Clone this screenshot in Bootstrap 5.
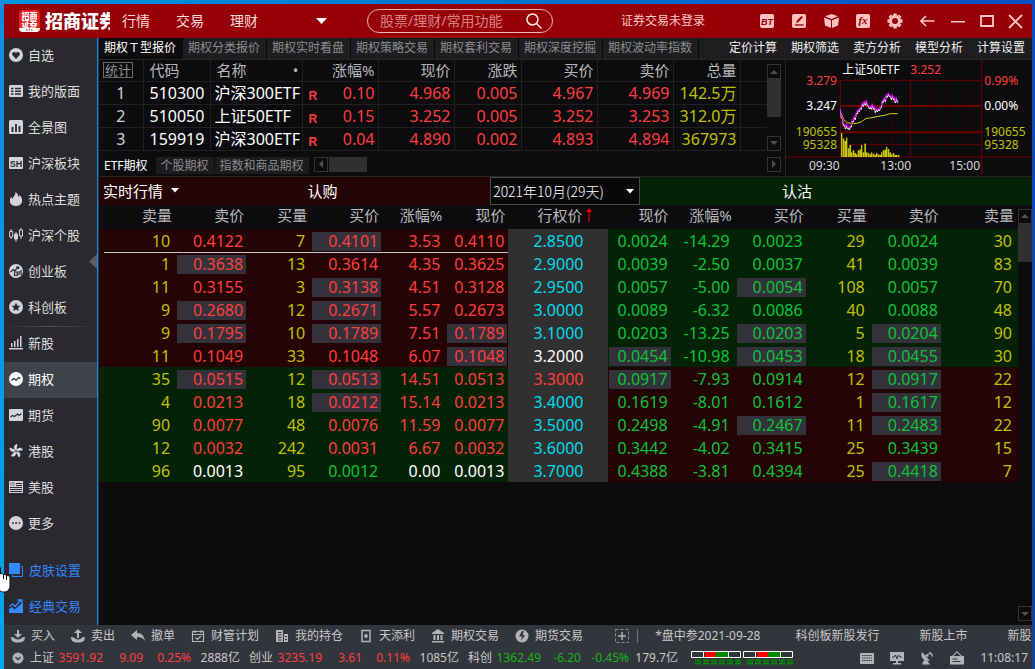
<!DOCTYPE html>
<html lang="zh-CN">
<head>
<meta charset="utf-8">
<meta name="viewport" content="width=device-width, initial-scale=1">
<title>招商证券</title>
<link href="https://cdn.jsdelivr.net/npm/bootstrap@5.3.0/dist/css/bootstrap.min.css" rel="stylesheet">
<style>
:root{--panel:#0c0c0e;--line:#252528;--up:#ff3d3d;--down:#0dc23b;--vol:#c0c000;--redbg:#250405;--greenbg:#042205}
body{font-family:"Noto Sans","Noto Sans CJK SC",sans-serif;font-size:12px;line-height:20px;color:#d2d2d2;
 background:linear-gradient(180deg,#0c8ee0,#00a8ee) left/4px 100% no-repeat,linear-gradient(180deg,#0a4cc0,#0d43a0) right/3px 100% no-repeat,linear-gradient(90deg,#0095e2,#0a50c0);
 padding:4px 3px 0 4px;overflow:hidden}
a{color:inherit;text-decoration:none}
button{background:none;border:0;padding:0;color:inherit}
svg{display:block;flex:none}
.up{color:var(--up)}.down{color:var(--down)}.vol{color:var(--vol)}.cyan{color:#00dcf0}.flat{color:#fff}
.app{min-height:calc(100vh - 4px)}
/* title bar */
.titlebar{height:34px;background:#960006;color:#ffc8c8;padding-left:15px}
.wordmark{width:65px;font-size:18px;font-weight:900;color:#fff;overflow:hidden;white-space:nowrap;margin-left:5px}
.mainmenu{font-size:14px;gap:26px;margin-left:12px;color:#f6dcdc}
.search{width:186px;height:24px;border:1px solid #f0b4b4;border-radius:12px;margin-left:39px;padding:0 10px 0 12px}
.search input{background:none;border:0;outline:0;color:#fff;font-size:14px;padding:0;min-width:0}
.search input::placeholder{color:#d98585;opacity:1}
.login{margin-left:68px}
.wintools{margin-right:2px}
.wintools button{width:32px;display:flex;justify-content:center}
.wintools .win{width:29px}
/* side bar */
.side{width:93px;background:#29292f;position:relative}
.side a{height:36px;display:flex;align-items:center;padding:0 0 2px 5px;gap:5px;font-size:13px;color:#dedede}
.side a svg{fill:#d4d4d6}
.side a.on{background:#40434b;color:#fff}
.side a.on svg{fill:#fff}
.side a.blue{color:#3388ff;gap:6px}.side a.blue svg{fill:#3388ff}
.side .rule{background:linear-gradient(90deg,transparent,#505056,transparent) top/100% 1px no-repeat}
.fold{position:absolute;right:0;top:216px}
.work{background:var(--panel);margin-left:1px;border-left:1px solid #303034;min-width:0}
/* page tabs */
.tabsbar{height:22px;background:#1e1e20;border-bottom:1px solid var(--line);white-space:nowrap}
.tabsbar .t{width:84px;border-right:1px solid #08080a;color:#8c8c8e;padding-left:5px}
.tabsbar .t.wide{width:96px}
.tabsbar .t.on{background:var(--panel);color:#fff}
.tabsbar .r{gap:14px;color:#f0f0f0;margin-right:7px}
/* quote list */
.watch{border-bottom:1px solid var(--line)}
.quotes,.chain{table-layout:fixed;width:100%;border-collapse:collapse;white-space:nowrap}
.quotes th,.chain th{font-weight:400;font-size:15px;color:#b8b8ba}
.quotes th,.quotes td{height:23px;border:1px solid #202023;border-width:0 1px 1px 0;padding:0 3px 0 0;text-align:right;line-height:20px}
.quotes th{height:21px;line-height:18px}
.quotes td{font-size:16px}
.quotes .l{text-align:left;padding-left:6px}.quotes .c{text-align:center;padding:0}
.quotes tr>:last-child{border-right:0}
.stat{border:1px solid #6a6a6c;font-size:13px;line-height:14px;padding:0 1px;color:#909092;display:block}
.rmark{font:bold 12px "Liberation Sans",sans-serif;padding:6px 0 0 6px}
.sb{width:14px}
.arrowbox{width:14px;height:15px;border:1px solid #333335;display:flex;align-items:center;justify-content:center;flex:none}
.arrowbox svg{fill:#505052}
.thumb{background:#303032}
.subtabs{gap:1px;padding:6px 4px 2px 0}
.subtabs a{height:17px;line-height:17px;padding:0 5px;color:#8c8c8e;background:#1c1c1e}
.subtabs a.on{background:none;color:#fff;padding-right:7px}
.chartbox{border-left:1px solid var(--line)}
/* option chain */
.band{height:28px;color:#fff;font-size:15px}
.call{background:var(--redbg)}.put{background:var(--greenbg)}
.band .put{width:42%;padding-right:78px}
.expiry{width:150px;background:#08080a;border:1px solid #4a4a4c;color:#fff;font:300 14px "Noto Sans CJK SC",sans-serif;position:relative}
.expiry select{appearance:none;background:none;border:0;color:inherit;font:inherit;width:100%;height:26px;padding:0 2px;outline:0}
.expiry svg{position:absolute;right:5px;top:11px;pointer-events:none}
.chain th{height:24px;text-align:right;padding:0 3px 3px 0;line-height:18px}
.chain th.n{padding-right:4px}
.chain td{height:23px;padding:3px 1px 1px;text-align:right;font-size:16px;line-height:19px}
.chain td span{display:block;padding-right:3px}
.chain td.n span{padding-right:5px}
.chain .hl span{background:#33323a}
.chain td.k{background:#303030;text-align:center}
.chain td.k span{padding:0}
.chain .a{background-color:var(--redbg)}.chain .b{background-color:var(--greenbg)}
.chain .under{background-image:linear-gradient(#c8c8c8,#c8c8c8);background-size:100% 1px;background-repeat:no-repeat}
.chain .under:first-child{background-position:5px 0}
/* bottom bars */
.foot{background:#33353d;color:#c8c8ca;white-space:nowrap;overflow:hidden}
.foot svg{fill:#b4b4b6}
.foot .bar{height:22px;padding-left:7px}
.foot .act{gap:6px;margin-right:16px}
.news{gap:35px;margin-left:17px}
.news :nth-child(n+3){margin-left:5px}
.idx{display:grid;grid-template-columns:24px 49px 40px 48px 49px;text-align:right;margin-right:9px}
.foot .down{color:#14b414}
.cursor{position:absolute;left:-7px;top:566px}
</style>
</head>
<body>
<div class="app d-flex flex-column">
<header class="titlebar d-flex align-items-center">
 <svg width="21" height="22" viewBox="0 0 21 22"><rect width="21" height="22" rx="4" fill="#e02020"/><path d="M0 18h21a4 4 0 0 1-4 4H4a4 4 0 0 1-4-4z" fill="#fff"/><g fill="#fff" font-size="8" font-weight="900" text-anchor="middle"><text x="10.500" y="9">招商</text><text x="10.500" y="17">证券</text></g><path d="M7 20h7" stroke="#c02020" stroke-dasharray="1.500 1"/></svg>
 <div class="wordmark">招商证券</div>
 <nav class="mainmenu d-flex"><a href="#">行情</a><a href="#">交易</a><a href="#">理财</a></nav>
 <button class="ms-5 ps-2" aria-label="更多菜单"><svg width="14" height="8"><path d="M2 1h11L7.500 7z" fill="#fff"/></svg></button>
 <label class="search d-flex align-items-center"><input class="flex-grow-1" placeholder="股票/理财/常用功能" aria-label="搜索"><svg width="16" height="16" fill="none" stroke="#ffe8e8" stroke-width="1.500"><circle cx="6.500" cy="6.500" r="5.500"/><path d="M10.500 10.500l5 5"/></svg></label>
 <a href="#" class="login">证券交易未登录</a>
 <div class="wintools d-flex align-items-center ms-auto">
  <button aria-label="BT"><svg width="14" height="14"><rect width="14" height="14" rx="2" fill="#ffc0c0"/><text x="7" y="10.500" font-size="9" font-weight="900" font-style="italic" text-anchor="middle" fill="#960006" font-family="Liberation Sans">BT</text></svg></button>
  <button aria-label="画线"><svg width="14" height="14"><rect width="14" height="14" rx="2" fill="#ffc0c0"/><path d="M3 11h8.500" stroke="#960006" stroke-width="1.300"/><path d="M4 9l1-2.500L9.500 2l1.500 1.300L6.500 8z" fill="#960006"/></svg></button>
  <button aria-label="工具箱"><svg width="15" height="14" fill="#ffc0c0"><path d="M7.500 0L14 2.300 7.500 5 1 2.300zM0 3.500l7 2.700V14L1 11.500zM15 3.500L8 6.200V14l6-2.500z"/></svg></button>
  <button aria-label="公式"><svg width="14" height="14"><rect width="14" height="14" rx="2" fill="#ffc0c0"/><text x="7" y="10" font-size="11" font-weight="700" font-style="italic" text-anchor="middle" fill="#960006" font-family="Liberation Serif">fx</text></svg></button>
  <button aria-label="设置"><svg width="16" height="16" viewBox="-8 -8 16 16"><circle r="4.500" fill="none" stroke="#ffc0c0" stroke-width="3"/><g stroke="#ffc0c0" stroke-width="3.500"><path d="M0-7.500V-5M0 7.500V5M-7.500 0H-5M7.500 0H5M-5.300-5.300L-4-4M5.300 5.300L4 4M-5.300 5.300L-4 4M5.300-5.300L4-4"/></g></svg></button>
  <button aria-label="返回"><svg width="15" height="12" fill="none" stroke="#ffc8c8" stroke-width="1.600"><path d="M14.500 6H1M6 1L1 6l5 5"/></svg></button>
  <button class="win" aria-label="最小化"><svg width="14" height="12"><path d="M0 6h14v1.500H0z" fill="#ffc8c8"/></svg></button>
  <button class="win" aria-label="最大化"><svg width="14" height="13" fill="none" stroke="#ffc8c8" stroke-width="1.800"><path d="M1 1h12v10H1z"/></svg></button>
  <button class="win" aria-label="关闭"><svg width="15" height="15" stroke="#ffc8c8" stroke-width="1.800"><path d="M1 1l13 13M14 1L1 14"/></svg></button>
 </div>
</header>
<div class="d-flex flex-grow-1">
<nav class="side d-flex flex-column flex-shrink-0">
 <a href="#"><svg width="14" height="14"><circle cx="7" cy="7" r="7"/><path d="M7 11L3.500 7.300C2 5 5 2.800 7 5c2-2.200 5 0 3.500 2.300z" fill="#29292f"/></svg>自选</a>
 <a href="#"><svg width="14" height="14"><rect y="1" width="14" height="12" rx="1.500"/><path d="M2 4.500h2.500M6 4.500h6M2 7.200h2.500M6 7.200h6M2 10h2.500M6 10h6" stroke="#29292f" stroke-width="1.500"/></svg>我的版面</a>
 <a href="#"><svg width="14" height="14"><rect width="14" height="14" rx="1.500"/><path d="M3.500 12V7M7 12V4M10.500 12V6" stroke="#29292f" stroke-width="1.800"/></svg>全景图</a>
 <a href="#"><svg width="14" height="14"><rect y="1" width="14" height="12" rx="1"/><text x="7" y="10.500" font-size="9" font-weight="700" text-anchor="middle" fill="#29292f" font-family="Liberation Sans">SH</text></svg>沪深板块</a>
 <a href="#"><svg width="14" height="14"><path d="M6.500 0c3 2 2.500 4 3 5 .8-.5 1-1.300.8-2.300C13 5 13.500 8 13 10c-.7 2.700-3 4-6 4s-5.500-1.500-6-4c-.4-2 .3-4 1.500-5.500 0 1.300.3 2 1 2.500C3.800 5 6.500 3.500 6.500 0z"/></svg>热点主题</a>
 <a href="#"><svg width="14" height="14"><path d="M1.600 1h1v2.500h-1zM1.600 9h1v2h-1zM6.500 4h1v10h-1zM11.500 0h1v2h-1zM11.500 8h1v3h-1z"/><rect x="5" y="5.500" width="4" height="6" rx="1"/><path d="M.7 3.500h3v5.500h-3zM10.500 2h3v6h-3z" fill="none" stroke="#d4d4d6"/></svg>沪深个股</a>
 <a href="#"><svg width="14" height="14"><circle cx="7" cy="7" r="7"/><path d="M1.500 8l3-2.500 1 1.500 4-4M7 3h2.700v2M5.500 8h2.800v3.500H5.500V8.500M10 7v4M12 6v5" fill="none" stroke="#29292f" stroke-width="1.200"/></svg>创业板</a>
 <a href="#"><svg width="14" height="14"><circle cx="7" cy="7" r="7"/><path d="M7 2.800l1.300 2.700 3 .4-2.200 2 .6 3L7 9.500l-2.700 1.400.6-3-2.200-2 3-.4z" fill="#29292f"/></svg>科创板</a>
 <a href="#" class="rule"><svg width="14" height="14"><path d="M0 12h14v1.500H0zM2 7h1.500v4H2zM5 5h1.500v6H5zM8 3h1.500v8H8zM11 0h1.500v11H11z"/></svg>新股</a>
 <a href="#" class="on"><svg width="14" height="14"><circle cx="7" cy="7" r="7"/><path d="M2.500 8.500L5 6.500l2 1.700 2.700-2.700 1.800.8" fill="none" stroke="#40434b" stroke-width="1.400"/></svg>期权</a>
 <a href="#"><svg width="14" height="14"><rect y="1" width="14" height="12" rx="1"/><path d="M1.500 9l2-1.500 2 1 3-2.500 1.500 1.500 2.500-2" fill="none" stroke="#29292f" stroke-width="1.200"/></svg>期货</a>
 <a href="#"><svg width="14" height="14" viewBox="-7 -7 14 14"><path id="petal" d="M0-.5C-3-2.500-2.500-6 .8-7 2.500-5.500 0-3.800 1.200-1.800z"/><use href="#petal" transform="rotate(72)"/><use href="#petal" transform="rotate(144)"/><use href="#petal" transform="rotate(216)"/><use href="#petal" transform="rotate(288)"/></svg>港股</a>
 <a href="#"><svg width="14" height="14"><path d="M0 1h14v12H0z"/><path d="M7 3.500h6M7 5.500h6M1 7.500h12M1 9.500h12M1 11.500h12" stroke="#29292f"/><path d="M1.500 3h4.500M1.500 5h4.500" stroke="#29292f" stroke-dasharray="1 1"/></svg>美股</a>
 <a href="#"><svg width="14" height="14"><circle cx="7" cy="7" r="7"/><path d="M3 6.300h1.800v1.500H3zM6.200 6.300H8v1.500H6.200zM9.500 6.300h1.800v1.500H9.500z" fill="#29292f"/></svg>更多</a>
 <a href="#" class="blue mt-auto"><svg width="14" height="14"><path d="M0 0h11v11H0z"/><path d="M12 3.500h1.500v10h-10V12" fill="none" stroke="#3388ff"/></svg>皮肤设置</a>
 <a href="#" class="blue"><svg width="14" height="14"><path d="M0 14V10l3-2 2.500 2.500L12 5h2v9z"/><path d="M.5 7.500L3.500 5l2.500 2.500L11.500 1.500M8.500 1H13v4" fill="none" stroke="#3388ff" stroke-width="1.500"/></svg>经典交易</a>
 <svg class="fold" width="8" height="15"><path d="M8 0v15L0 7.500z" fill="#5a5b63"/></svg>
</nav>
<main class="work flex-grow-1 d-flex flex-column">
 <nav class="tabsbar d-flex">
  <a href="#" class="t on">期权Ｔ型报价</a><a href="#" class="t">期权分类报价</a><a href="#" class="t">期权实时看盘</a><a href="#" class="t">期权策略交易</a><a href="#" class="t">期权套利交易</a><a href="#" class="t">期权深度挖掘</a><a href="#" class="t wide">期权波动率指数</a>
  <div class="r d-flex ms-auto"><a href="#">定价计算</a><a href="#">期权筛选</a><a href="#">卖方分析</a><a href="#">模型分析</a><a href="#">计算设置</a></div>
 </nav>
 <div class="watch d-flex">
  <div class="flex-grow-1 d-flex flex-column">
   <div class="d-flex flex-grow-1">
    <div class="flex-grow-1">
    <table class="quotes">
     <colgroup><col style="width:44px"><col style="width:67px"><col style="width:92px"><col style="width:76px"><col style="width:76px"><col style="width:67px"><col style="width:76px"><col style="width:76px"><col style="width:67px"><col></colgroup>
     <thead><tr><th class="l ps-1"><button class="stat">统计</button></th><th class="l">代码</th><th class="l"><div class="d-flex justify-content-between">名称<span>•</span></div></th><th>涨幅%</th><th>现价</th><th>涨跌</th><th>买价</th><th>卖价</th><th>总量</th><th></th></tr></thead>
     <tbody id="quotes"></tbody>
    </table>
    </div>
    <div class="sb d-flex flex-column me-1"><div class="arrowbox mt-1"><svg width="8" height="4"><path d="M4 0l4 4H0z"/></svg></div><div class="thumb" style="height:38px"></div><div class="arrowbox mt-auto"><svg width="8" height="4"><path d="M4 4l4-4H0z"/></svg></div></div>
   </div>
   <div class="subtabs d-flex">
    <a href="#" class="on">ETF期权</a><a href="#">个股期权</a><a href="#">指数和商品期权</a>
    <div class="arrowbox ms-1"><svg width="4" height="8"><path d="M0 4l4-4v8z"/></svg></div><div class="thumb" style="width:38px;height:15px"></div>
    <div class="arrowbox ms-auto"><svg width="4" height="8"><path d="M4 4L0 0v8z"/></svg></div>
   </div>
  </div>
  <div class="chartbox flex-shrink-0">
   <svg width="246" height="115" viewBox="288 180 738 345">
    <g stroke="#6e0000" stroke-width="3" fill="none"><path d="M451 241H875M451 433H875M288 471H1026M451 241V471M661 241V471M875 180V525"/><path d="M451 318H875M451 397H875" stroke-width="6"/><path d="M505 241V471M556 241V471M608 241V471M715 241V471M768 241V471M820 241V471" stroke="#4c0000" stroke-dasharray="6 6"/></g>
    <g id="bars" fill="#c8c800"></g>
    <path d="M455 343l6 16 12 10 14 1h14l14-5 12-9 18-3 20-4 18-3 18-5h22" fill="none" stroke="#e6c800" stroke-width="3"/>
    <path id="white" fill="none" stroke="#fff" stroke-width="3"/>
    <path id="violet" fill="none" stroke="#e000f0" stroke-width="3"/>
    <g font-size="36">
     <text x="457" y="221" fill="#fff">上证50ETF</text><text x="661" y="221" fill="#ff3d3d">3.252</text>
     <g text-anchor="end"><text x="441" y="254" fill="#ff3d3d">3.279</text><text x="441" y="330" fill="#fff">3.247</text><text x="441" y="408" fill="#c0c000">190655</text><text x="441" y="447" fill="#c0c000">95328</text></g>
     <text x="883" y="254" fill="#ff3d3d">0.99%</text><text x="883" y="330" fill="#fff">0.00%</text><text x="883" y="408" fill="#c0c000">190655</text><text x="883" y="447" fill="#c0c000">95328</text>
     <g fill="#d8d8d8"><text x="357" y="510">09:30</text><text x="571" y="510">13:00</text><text x="778" y="510">15:00</text></g>
    </g>
   </svg>
  </div>
 </div>
 <div class="band d-flex align-items-stretch">
  <div class="call flex-grow-1 d-flex align-items-center ps-1"><button class="d-flex align-items-center gap-2">实时行情<svg width="8" height="5"><path d="M0 0h8L4 4.500z" fill="#fff"/></svg></button><span class="mx-auto pe-4">认购</span></div>
  <div class="expiry"><select aria-label="到期月份"><option>2021年10月(29天)</option></select><svg width="8" height="5"><path d="M0 0h8L4 4.500z" fill="#fff"/></svg></div>
  <div class="put d-flex align-items-center justify-content-center">认沽</div>
 </div>
 <div class="d-flex flex-grow-1">
  <div class="flex-grow-1">
  <table class="chain">
   <colgroup><col style="width:77px"><col style="width:71px"><col style="width:64px"><col style="width:71px"><col style="width:64px"><col style="width:62px"><col style="width:100px"><col style="width:63px"><col style="width:64px"><col style="width:71px"><col style="width:64px"><col style="width:71px"><col style="width:76px"></colgroup>
   <thead><tr><th class="n">卖量</th><th>卖价</th><th class="n">买量</th><th>买价</th><th class="n">涨幅%</th><th>现价</th><th><div class="d-flex align-items-center justify-content-center gap-1 ps-3">行权价<svg width="6" height="14"><path d="M2.500 14V4H0L3 0l3 4H3.500v10z" fill="#f00"/></svg></div></th><th>现价</th><th class="n">涨幅%</th><th>买价</th><th class="n">买量</th><th>卖价</th><th class="n">卖量</th></tr></thead>
   <tbody id="chain"></tbody>
  </table>
  </div>
  <div class="sb d-flex flex-column"><div class="arrowbox mt-1"><svg width="8" height="4"><path d="M4 0l4 4H0z"/></svg></div><div class="thumb" style="height:38px"></div><div class="arrowbox mt-auto mb-1"><svg width="8" height="4"><path d="M4 4l4-4H0z"/></svg></div></div>
 </div>
</main>
</div>
<footer class="foot">
 <div class="bar d-flex align-items-center">
  <a href="#" class="act d-flex align-items-center"><svg width="14" height="14"><path d="M6 1h2v4h3L7 9 3 5h3zM0 8l3 .5c1 2.500 7 2.500 8 0l3-.5c0 4.500-3 5.500-7 5.500S0 12.500 0 8z"/></svg>买入</a>
  <a href="#" class="act d-flex align-items-center"><svg width="14" height="14"><path d="M6 9h2V4h3L7 0 3 4h3zM0 8l3 .5c1 2.500 7 2.500 8 0l3-.5c0 4.500-3 5.500-7 5.500S0 12.500 0 8z"/></svg>卖出</a>
  <a href="#" class="act d-flex align-items-center"><svg width="14" height="14"><path d="M0 6l6-5v3c5 0 7 3 8 8-2-3-4-4-8-4v3z"/></svg>撤单</a>
  <a href="#" class="act d-flex align-items-center"><svg width="14" height="14" fill="none"><path d="M1.500 2.500h11v10h-11zM1.500 5.500h11M4 1v3M10 1v3M4.500 8.500l2 2 3.500-3.500" fill="none" stroke="#b4b4b6" stroke-width="1.200"/></svg>财管计划</a>
  <a href="#" class="act d-flex align-items-center"><svg width="14" height="14"><path d="M1 1h7v12H1zM9 5h4v8H9z"/><path d="M3 3.500h3.500M3 6h3.500M3 8.500h3.500M3 11h3.500M10 7.500h2M10 10.500h2" stroke="#33353d"/></svg>我的持仓</a>
  <a href="#" class="act d-flex align-items-center"><svg width="14" height="14"><rect x="3" y="1.500" width="8" height="11" fill="none" stroke="#b4b4b6" stroke-width="1.500"/><path d="M7 4.500l2.200 2.500L7 9.500 4.800 7z"/></svg>天添利</a>
  <a href="#" class="act d-flex align-items-center"><svg width="14" height="14"><path d="M7 0l6 4v1H1V4zM2.500 6h2v5h-2zM6 6h2v5H6zM9.500 6h2v5h-2zM1 12h12v1.500H1z"/></svg>期权交易</a>
  <a href="#" class="act d-flex align-items-center"><svg width="14" height="14"><circle cx="7" cy="7" r="6.500"/><path d="M7 2L4 7.500h3L6 12l4-6H7.500L9 2z" fill="#33353d"/></svg>期货交易</a>
  <button class="ms-3 border-end border-secondary pe-2" aria-label="添加"><svg width="14" height="14"><path d="M.5.500h13v13H.5z" fill="none" stroke="#8c8c90" stroke-dasharray="3 2"/><path d="M6.300 3h1.500v3.300H11v1.500H7.800V11H6.300V7.800H3V6.300h3.300z"/></svg></button>
  <div class="news d-flex"><span>*盘中参2021-09-28</span><span>科创板新股发行</span><span>新股上市</span><span>新股</span></div>
 </div>
 <div class="bar d-flex align-items-center">
  <svg class="me-1" width="15" height="14"><circle cx="7" cy="7" r="5.500"/><path d="M4.500 6l2.500 2.500L9.500 6" fill="none" stroke="#33353d" stroke-width="1.300"/></svg>
  <div class="idx"><span>上证</span><span class="up">3591.92</span><span class="up">9.09</span><span class="up">0.25%</span><span>2888亿</span></div>
  <div class="idx"><span>创业</span><span class="up">3235.19</span><span class="up">3.61</span><span class="up">0.11%</span><span>1085亿</span></div>
  <div class="idx"><span>科创</span><span class="down">1362.49</span><span class="down">-6.20</span><span class="down">-0.45%</span><span>179.7亿</span></div>
  <svg class="ms-1" width="104" height="15"><g id="meter"><path d="M.5.500h49v6H.5zM12.500.500v6M37.500.500v6" fill="none" stroke="#fff"/><path d="M14 1h11v5H14z" fill="#f00"/><path d="M25 1h12v5H25z" fill="#008a00"/><path d="M4 9.500h46M4 12.500h46" stroke="#008a00" stroke-width="2" stroke-dasharray="6 2"/></g><use href="#meter" x="52"/></svg>
  <div class="d-flex align-items-center ms-auto me-1">
   <svg class="me-3" width="14" height="14"><rect y="2" width="14" height="11" rx="1"/><path d="M2 4.500h10M2 7h10M2 9.500h10" stroke="#33353d" stroke-dasharray="1.500 .7"/></svg>
   <svg class="me-3" width="14" height="14"><path d="M0 1h14v9H8v2h3v1.500H3V12h3v-2H0z"/><path d="M2 6h2l1.500-2L7 8l1.500-4L10 6h2" fill="none" stroke="#33353d"/></svg>
   <svg class="me-3" width="14" height="14"><path d="M2 1c-2 5 1 9 8 9zM4 9L2 13.500h8L7.500 10zM9 1c2.500.5 4 2 4 4.500l-1 .3C11.500 4 10.500 3 8.700 2.500zM5 4l4-1.500L8 6.500z"/></svg>
   <svg class="me-3" width="14" height="14"><path d="M0 5h14v8.500H0zM7 0l5 5h-1.500L7 1.500 3.500 5H2z"/><path d="M2.500 8h5M2.500 10.500h8" stroke="#33353d"/></svg>
   <time>11:08:17</time>
  </div>
 </div>
</footer>
</div>
<svg class="cursor" width="18" height="27"><path d="M4 20V1.500a1.800 1.800 0 0 1 3.500 0V8c1-1 3-.5 3 1 1-1 3-.5 3 1 1.500-1 3.500 0 3.500 1.500V19c0 4-2 7-6 7-4 0-5-2-7-6z" fill="#fff" stroke="#111"/><path d="M10.500 9v4M13.500 10v4" stroke="#111"/></svg>
<script src="https://cdn.jsdelivr.net/npm/bootstrap@5.3.0/dist/js/bootstrap.bundle.min.js"></script>
<script>
const quotes=[['510300','沪深300ETF','0.10','4.968','0.005','4.967','4.969','142.5万'],['510050','上证50ETF','0.15','3.252','0.005','3.252','3.253','312.0万'],['159919','沪深300ETF','0.04','4.890','0.002','4.893','4.894','367973']];
document.getElementById('quotes').innerHTML=quotes.map((q,i)=>`<tr><td class="c">${i+1}</td><td class="l flat">${q[0]}</td><td class="l ps-1 flat">${q[1]}</td><td class="up"><div class="d-flex justify-content-between"><span class="rmark">R</span>${q[2]}</div></td>${q.slice(3,7).map(v=>`<td class="up">${v}</td>`).join('')}<td class="vol">${q[7]}</td><td></td></tr>`).join('');
/* "!" marks a recently changed, highlighted cell */
const rows=`10 0.4122 7 0.4101! 3.53 0.4110 2.8500 0.0024 -14.29 0.0023 29 0.0024 30
1 0.3638! 13 0.3614 4.35 0.3625 2.9000 0.0039 -2.50 0.0037 41 0.0039 83
11 0.3155 3 0.3138! 4.51 0.3128 2.9500 0.0057 -5.00 0.0054! 108 0.0057 70
9 0.2680! 12 0.2671! 5.57 0.2673 3.0000 0.0089 -6.32 0.0086 40 0.0088 48
9 0.1795! 10 0.1789! 7.51 0.1789! 3.1000 0.0203 -13.25 0.0203! 5 0.0204! 90
11 0.1049 33 0.1048 6.07 0.1048! 3.2000 0.0454! -10.98 0.0453! 18 0.0455! 30
35 0.0515! 12 0.0513! 14.51 0.0513 3.3000 0.0917! -7.93 0.0914 12 0.0917! 22
4 0.0213 18 0.0212! 15.14 0.0213 3.4000 0.1619 -8.01 0.1612 1 0.1617! 12
90 0.0077 48 0.0076 11.59 0.0077 3.5000 0.2498 -4.91 0.2467! 11 0.2483! 22
12 0.0032 242 0.0031 6.67 0.0032 3.6000 0.3442 -4.02 0.3415 25 0.3439 15
96 0.0013 95 0.0012 0.00 0.0013 3.7000 0.4388 -3.81 0.4394 25 0.4418! 7`.split('\n').map(r=>r.split(' '));
document.getElementById('chain').innerHTML=rows.map((r,i)=>'<tr>'+r.map((v,j)=>{
 const hl=v.endsWith('!'),t=v.replace('!','');let c;
 if([0,2,10,12].includes(j))c='vol n';
 else if(j===6)c='k '+(i===5?'flat':i===6?'up':'cyan');
 else if(j<6)c=i===10?(j===3?'down':'flat'):'up';
 else c='down';
 if(j===4||j===8)c+=' n';
 if(j!==6)c+=(j<6)===(i<6)?' a':' b';
 if(i===1&&j<6)c+=' under';
 return `<td class="${c}${hl?' hl':''}"><span>${t}</span></td>`}).join('')+'</tr>').join('');
const h=[72,55,48,58,26,36,14,20,12,8,20,22,36,14,40,14,12,8,14,10,6,12,8,6,14,20,22,30,24,14,8,12,6,6,6];
document.getElementById('bars').innerHTML=h.map((v,i)=>`<rect x="${453+i*5}" y="${471-v}" width="${i%3?5:4}" height="${v}"/>`).join('');
/* intraday price, one step per tick column */
const pts=[[451,325],[455,350],[461,374],[468,376],[476,384],[482,374],[488,364],[494,350],[502,336],[510,322],[518,314],[527,303],[535,318],[545,318],[553,322],[560,332],[570,322],[580,300],[590,288],[597,280],[605,290],[614,296],[621,300],[627,307]];
const jit=[0,6,-7,3,-4,8,-6,2,-3,5];
function trace(dy){let d='',k=0;for(let x=451;x<=627;x+=3){const n=pts.findIndex(p=>p[0]>=x),b=pts[n],a=pts[Math.max(n-1,0)];
 const y=a[0]===b[0]?b[1]:a[1]+(b[1]-a[1])*(x-a[0])/(b[0]-a[0]);d+=(d?'L':'M')+x+' '+Math.round(y+jit[k++%10]+dy)}return d}
document.getElementById('white').setAttribute('d',trace(4));
document.getElementById('violet').setAttribute('d',trace(-1));
</script>
</body>
</html>
